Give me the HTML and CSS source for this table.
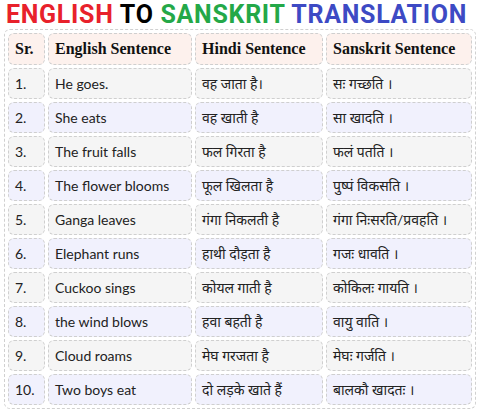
FILE: index.html
```html
<!DOCTYPE html>
<html lang="en">
<head>
<meta charset="utf-8">
<link rel="stylesheet" href="styles.css">
</head>
<body>
<h1 class="title"><span class="t-red">ENGLISH</span> <span class="t-black">TO</span> <span class="t-green">SANSKRIT</span> <span class="t-blue">TRANSLATION</span></h1>
<table class="tbl">
<thead>
<tr class="head"><th class="c-sr">Sr.</th><th class="c-en">English Sentence</th><th class="c-hi">Hindi Sentence</th><th class="c-sa">Sanskrit Sentence</th></tr>
</thead>
<tbody>
<tr class="odd"><td>1.</td><td>He goes.</td><td>वह जाता है।</td><td>सः गच्छति ।</td></tr>
<tr class="even"><td>2.</td><td>She eats</td><td>वह खाती है</td><td>सा खादति ।</td></tr>
<tr class="odd"><td>3.</td><td>The fruit falls</td><td>फल गिरता है</td><td>फलं पतति ।</td></tr>
<tr class="even"><td>4.</td><td>The flower blooms</td><td>फूल खिलता है</td><td>पुष्पं विकसति ।</td></tr>
<tr class="odd"><td>5.</td><td>Ganga leaves</td><td>गंगा निकलती है</td><td>गंगा निःसरति/प्रवहति ।</td></tr>
<tr class="even"><td>6.</td><td>Elephant runs</td><td>हाथी दौड़ता है</td><td>गजः धावति ।</td></tr>
<tr class="odd"><td>7.</td><td>Cuckoo sings</td><td>कोयल गाती है</td><td>कोकिलः गायति ।</td></tr>
<tr class="even"><td>8.</td><td>the wind blows</td><td>हवा बहती है</td><td>वायु वाति ।</td></tr>
<tr class="odd"><td>9.</td><td>Cloud roams</td><td>मेघ गरजता है</td><td>मेघः गर्जति ।</td></tr>
<tr class="even"><td>10.</td><td>Two boys eat</td><td>दो लड़के खाते हैं</td><td>बालकौ खादतः ।</td></tr>
</tbody>
</table>
</body>
</html>
```
FILE: styles.css
```css
html, body {
  margin: 0;
  padding: 0;
  background: #ffffff;
}
body {
  width: 480px;
  height: 413px;
  overflow: hidden;
}
.title {
  margin: 0;
  padding: 0 0 0 6px;
  height: 29px;
  font-family: "Roboto", "Open Sans", sans-serif;
  font-weight: 700;
  font-size: 25px;
  line-height: 29px;
  letter-spacing: 0.7px;
  white-space: nowrap;
}
.t-red { color: #e8212b; }
.t-black { color: #000000; }
.t-green { color: #24a848; }
.t-blue { color: #3d4ac4; }

.tbl {
  margin: 0 0 0 4px;
  width: 472px;
  border: 1px dashed #d0d0d0;
  border-radius: 6px;
  border-collapse: separate;
  border-spacing: 3px;
  padding: 0;
  font-family: "Lato", "Noto Sans", sans-serif;
  font-size: 14px;
  color: #222222;
}
.tbl th, .tbl td {
  border: 1px dashed #cfcfcf;
  border-radius: 6px;
  text-align: left;
  padding: 0 6px;
  vertical-align: middle;
  white-space: nowrap;
}
.tbl th {
  height: 30px;
  font-family: "Liberation Serif", "DejaVu Serif", serif;
  font-weight: 700;
  font-size: 16px;
  color: #111111;
  background: #fdf1ed;
}
.tbl td {
  height: 29px;
}
.c-sr { width: 23px; }
.c-en { width: 130px; }
.c-hi { width: 114px; }
.c-sa { width: 132px; }
.odd td { background: #f5f5f5; }
.even td { background: #f1f1fd; }
```
